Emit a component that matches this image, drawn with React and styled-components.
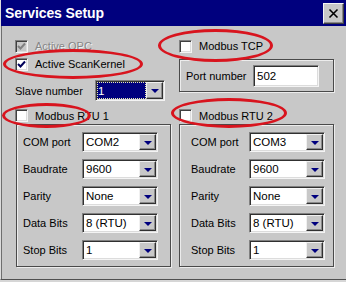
import React from 'react';
import styled, { createGlobalStyle } from 'styled-components';

const Global = createGlobalStyle`
  html, body { margin: 0; padding: 0; background: #d6d6d6; }
  body { font-family: "Liberation Sans", Arial, sans-serif; font-size: 11px; color: #000; }
  * { box-sizing: border-box; }
`;

const Window = styled.div`
  position: relative;
  width: 346px;
  height: 280px;
  background: #c8c8c8;
  border-left: 1px solid #dcdcdc;
  border-bottom: 1px solid #505050;
  box-shadow: inset 1px 0 0 #6e6e6e;
  overflow: hidden;
`;

const TitleBar = styled.div`
  height: 26px;
  background: #00007e;
  display: flex;
  align-items: center;
  justify-content: space-between;
  padding: 0 2px 0 4px;
`;

const Title = styled.span`
  color: #fff;
  font-weight: bold;
  font-size: 14px;
  letter-spacing: -0.1px;
`;

const CloseButton = styled.div`
  width: 21px;
  height: 21px;
  background: #c8c8c8;
  border: 1px solid;
  border-color: #f4f4f4 #404040 #404040 #f4f4f4;
  box-shadow: inset -1px -1px 0 #888;
  display: flex;
  align-items: center;
  justify-content: center;
`;

const Body = styled.div`
  display: grid;
  grid-template-columns: 157px 155px;
  column-gap: 7px;
  row-gap: 6px;
  padding: 11px 0 0 14px;
`;

const Column = styled.div`
  display: flex;
  flex-direction: column;
`;

const CheckRow = styled.div`
  display: flex;
  align-items: center;
  gap: 7px;
  height: ${p => p.$h || 18}px;
`;

const Box = styled.span`
  width: 13px;
  height: 13px;
  flex: none;
  background: ${p => (p.$disabled ? '#c8c8c8' : '#fff')};
  border: 1px solid;
  border-color: #808080 #f4f4f4 #f4f4f4 #808080;
  box-shadow: inset 1px 1px 0 #404040, inset -1px -1px 0 #dcdcdc;
  display: flex;
  align-items: center;
  justify-content: center;
`;

const Label = styled.span`
  color: ${p => (p.$disabled ? '#868686' : '#000')};
  text-shadow: ${p => (p.$disabled ? '1px 1px 0 #f0f0f0' : 'none')};
  white-space: nowrap;
  font-size: 11px;
`;

const FieldRow = styled.div`
  display: grid;
  grid-template-columns: ${p => p.$label}px ${p => p.$field}px;
  align-items: center;
  height: ${p => p.$h || 20}px;
  margin-top: ${p => p.$mt || 0}px;
`;

const Combo = styled.div`
  display: flex;
  height: 100%;
  border: 1px solid;
  border-color: #808080 #f4f4f4 #f4f4f4 #808080;
  box-shadow: inset 1px 1px 0 #303030, inset -1px -1px 0 #dcdcdc;
  padding: 1px;
  background: #fff;
`;

const ComboField = styled.div`
  flex: 1;
  display: flex;
  align-items: center;
  padding-left: ${p => (p.$selected ? 1 : 2)}px;
  font-size: 11.5px;
  color: ${p => (p.$selected ? '#fff' : '#000')};
  background: ${p => (p.$selected ? '#00007e' : '#fff')};
  outline: ${p => (p.$selected ? '1px dotted #e8e8b0' : 'none')};
  outline-offset: -1px;
  white-space: nowrap;
`;

const ComboButton = styled.div`
  width: 17px;
  flex: none;
  background: #c8c8c8;
  border: 1px solid;
  border-color: #f0f0f0 #303030 #303030 #f0f0f0;
  box-shadow: inset -1px -1px 0 #8a8a8a;
  display: flex;
  align-items: center;
  justify-content: center;
`;

const Arrow = styled.span`
  width: 0;
  height: 0;
  border-left: 4px solid transparent;
  border-right: 4px solid transparent;
  border-top: 4px solid #00007e;
  margin-top: 1px;
`;

const Group = styled.div`
  border: 1px solid #4a4a4a;
  box-shadow: 1px 1px 0 #ececec, inset 1px 1px 0 #ececec;
  margin-left: ${p => p.$ml || 0}px;
  margin-top: ${p => p.$mt || 0}px;
  width: 155px;
  height: ${p => p.$h}px;
  padding: ${p => p.$pad};
  display: flex;
  flex-direction: column;
  gap: 7px;
`;

const TextBox = styled.div`
  height: 22px;
  border: 1px solid;
  border-color: #808080 #f4f4f4 #f4f4f4 #808080;
  box-shadow: inset 1px 1px 0 #303030, inset -1px -1px 0 #dcdcdc;
  background: #fff;
  display: flex;
  align-items: center;
  padding-left: 3px;
  font-size: 11.5px;
`;

const Ellipse = styled.div`
  position: absolute;
  left: ${p => p.$x}px;
  top: ${p => p.$y}px;
  width: ${p => p.$w}px;
  height: ${p => p.$hh}px;
  border: 3px solid #d8141e;
  border-radius: 50%;
  pointer-events: none;
`;

const Check = ({ color }) => (
  <svg width="9" height="9" viewBox="0 0 9 9">
    <polyline points="1,4 3.5,6.5 8,1.5" fill="none" stroke={color} strokeWidth="2" />
  </svg>
);

const Checkbox = ({ checked, disabled, label }) => (
  <CheckRow>
    <Box $disabled={disabled}>{checked && <Check color={disabled ? '#808080' : '#00005a'} />}</Box>
    <Label $disabled={disabled}>{label}</Label>
  </CheckRow>
);

const ComboBox = ({ value, selected }) => (
  <Combo>
    <ComboField $selected={selected}>{value}</ComboField>
    <ComboButton>
      <Arrow />
    </ComboButton>
  </Combo>
);

const rtuRows = (com) => [
  ['COM port', com],
  ['Baudrate', '9600'],
  ['Parity', 'None'],
  ['Data Bits', '8 (RTU)'],
  ['Stop Bits', '1'],
];

const RtuSection = ({ title, com, ml, pad, labelW }) => (
  <Column>
    <CheckRow $h={17}>
      <Box />
      <Label>{title}</Label>
    </CheckRow>
    <Group $ml={ml} $h={143} $pad={pad}>
      {rtuRows(com).map(([l, v]) => (
        <FieldRow key={l} $label={labelW} $field={76}>
          <Label>{l}</Label>
          <ComboBox value={v} />
        </FieldRow>
      ))}
    </Group>
  </Column>
);

export default function App() {
  return (
    <>
      <Global />
      <Window>
        <TitleBar>
          <Title>Services Setup</Title>
          <CloseButton>
            <svg width="11" height="11" viewBox="0 0 11 11">
              <path d="M1.5 1.5 L9.5 9.5 M9.5 1.5 L1.5 9.5" stroke="#000" strokeWidth="1.6" />
            </svg>
          </CloseButton>
        </TitleBar>
        <Body>
          <Column>
            <Checkbox checked disabled label="Active OPC" />
            <Checkbox checked label="Active ScanKernel" />
            <FieldRow $label={80} $field={70} $h={21} $mt={7}>
              <Label>Slave number</Label>
              <ComboBox value="1" selected />
            </FieldRow>
          </Column>
          <Column>
            <Checkbox label="Modbus TCP" />
            <Group $mt={4} $h={33} $pad="0 0 0 6px">
              <FieldRow $label={67} $field={66} $h={31}>
                <Label>Port number</Label>
                <TextBox>502</TextBox>
              </FieldRow>
            </Group>
          </Column>
          <RtuSection title="Modbus RTU 1" com="COM2" ml={1} pad="7px 0 0 6px" labelW={59} />
          <RtuSection title="Modbus RTU 2" com="COM3" ml={0} pad="7px 0 0 11px" labelW={58} />
        </Body>
        <Ellipse $x={2} $y={49} $w={140} $hh={30} />
        <Ellipse $x={157} $y={29} $w={115} $hh={33} />
        <Ellipse $x={1} $y={103} $w={89} $hh={25} />
        <Ellipse $x={170} $y={98} $w={116} $hh={30} />
      </Window>
    </>
  );
}
